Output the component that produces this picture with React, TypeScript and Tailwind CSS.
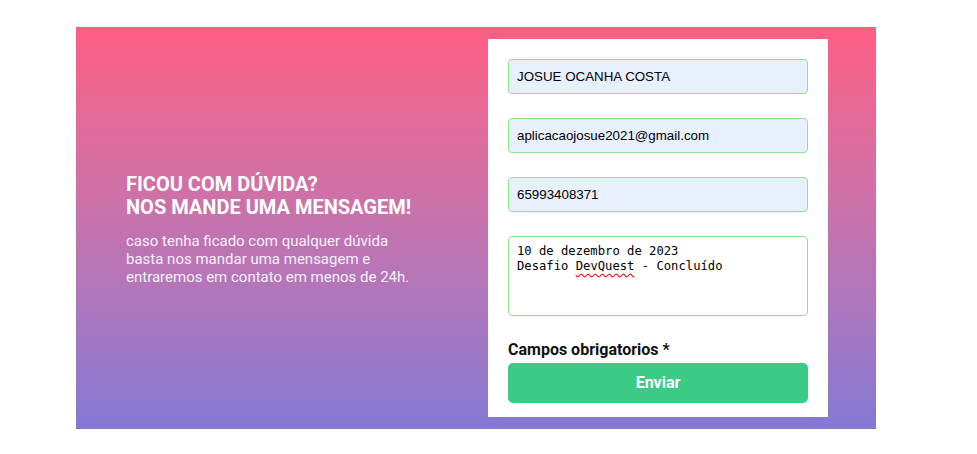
import React from 'react';

function App() {
  return (
    <div className="w-[977px] h-[454px] bg-white pt-[27px] pl-[76px]">
      <div className="flex w-[800px] h-[402px] bg-linear-to-b from-[#ff5e84] to-[#8479d4]">
        <div className="flex-1 flex flex-col justify-center pl-[50px] pt-[3px] font-['Roboto',sans-serif] text-white">
          <h1 className="text-[20px] font-bold leading-[23px] uppercase">
            Ficou com dúvida?
            <br />
            Nos mande uma mensagem!
          </h1>
          <p className="mt-[13px] text-[15px] leading-[18px] text-[#f6f0fb]">
            caso tenha ficado com qualquer dúvida
            <br />
            basta nos mandar uma mensagem e
            <br />
            entraremos em contato em menos de 24h.
          </p>
        </div>

        <form className="w-[340px] mr-[48px] my-[12px] bg-white px-[20px] pt-[20px] flex flex-col">
          <input
            className="h-[35px] w-full rounded-[4px] border border-[#8fe48f] bg-[#e8f0fe] px-[8px] text-[13.33px] text-black font-['Liberation_Sans',Arial,sans-serif] outline-none"
            defaultValue="JOSUE OCANHA COSTA"
          />
          <input
            className="mt-[24px] h-[35px] w-full rounded-[4px] border border-[#8fe48f] bg-[#e8f0fe] px-[8px] text-[13.33px] text-black font-['Liberation_Sans',Arial,sans-serif] outline-none"
            defaultValue="aplicacaojosue2021@gmail.com"
          />
          <input
            className="mt-[24px] h-[35px] w-full rounded-[4px] border border-[#8fe48f] bg-[#e8f0fe] px-[8px] text-[13.33px] text-black font-['Liberation_Sans',Arial,sans-serif] outline-none"
            defaultValue="65993408371"
          />
          <div className="mt-[24px] h-[80px] w-full rounded-[4px] border border-[#8fe48f] bg-white px-[8px] pt-[7px] text-[12.2px] leading-[15px] text-black font-['DejaVu_Sans_Mono','Liberation_Mono',monospace]">
            10 de dezembro de 2023
            <br />
            Desafio{' '}
            <span className="underline decoration-wavy decoration-[#e02020] underline-offset-[3px]">DevQuest</span>{' '}
            - Concluído
          </div>
          <label className="mt-[24px] block text-[16px] leading-[19px] font-bold text-[#111] font-['Roboto',sans-serif]">
            Campos obrigatorios *
          </label>
          <button
            type="button"
            className="mt-[4px] h-[40px] w-full rounded-[5px] bg-[#3ccb87] text-white text-[16px] font-bold font-['Roboto',sans-serif]"
          >
            Enviar
          </button>
        </form>
      </div>
    </div>
  );
}

export default App;
